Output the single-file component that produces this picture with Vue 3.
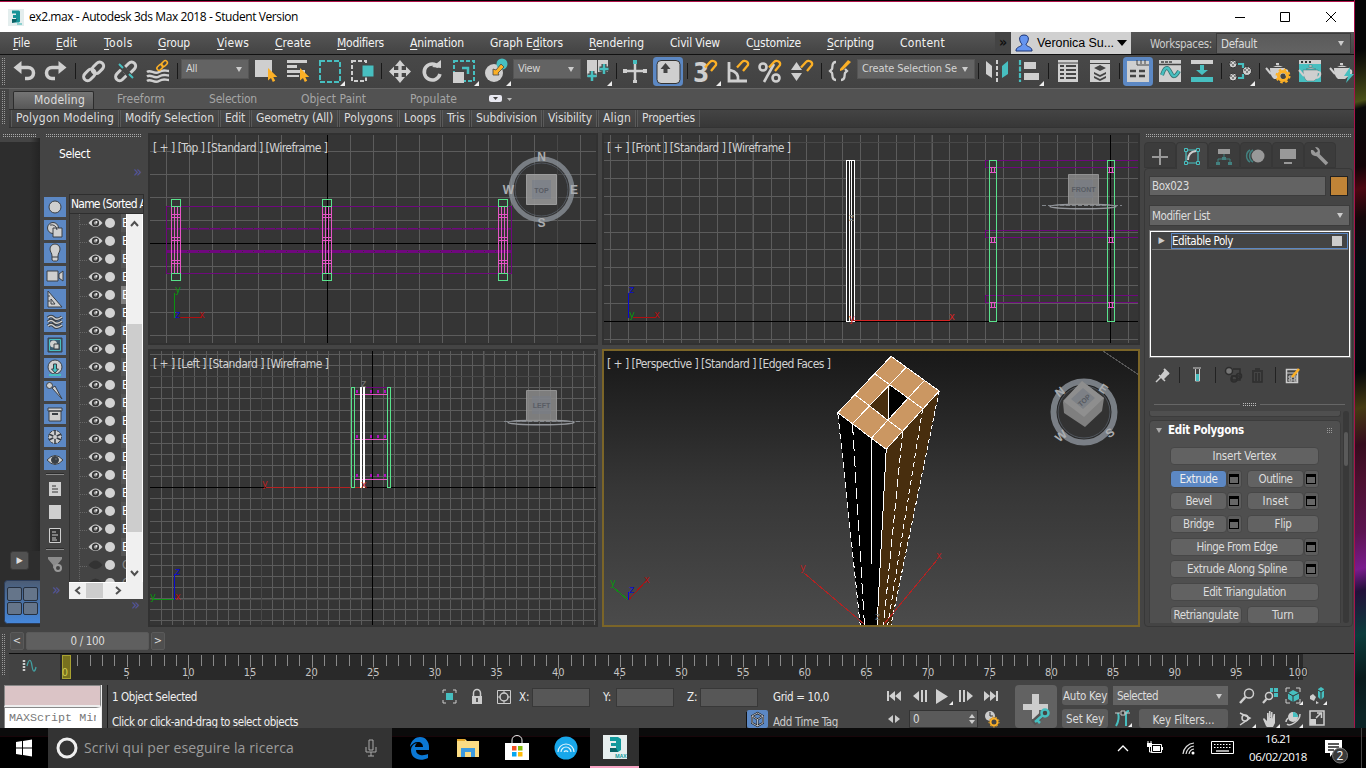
<script setup>
const vFit = {
  mounted(el, { value }) {
    if (!value) return
    const natural = el.getBoundingClientRect().width
    const count = el.textContent.length
    if (count) el.style.letterSpacing = (value - natural) / count + 'px'
  },
}

const menu = [
  ['', 'F', 'ile', 43, 17], ['', 'E', 'dit', 48, 21], ['', 'T', 'ools', 54, 29], ['', 'G', 'roup', 59, 32],
  ['', 'V', 'iews', 58, 32], ['', 'C', 'reate', 62, 36], ['', 'M', 'odifiers', 73, 47], ['', 'A', 'nimation', 80, 54],
  ['Graph E', 'd', 'itors', 99, 73], ['', 'R', 'endering', 81, 55], ['Civil View', '', '', 76, 50],
  ['C', 'u', 'stomize', 81, 55], ['', 'S', 'cripting', 73, 47], ['Content', '', '', 70, 45],
]

const L = '#cfcfcf'
const T = '#47bfc0'
const O = '#fcb026'
const corner = '<path d="M31 26v5h-5z" fill="#eee"/>'
const pointer = `<path d="M19 13v12.500l3-2.500 1.800 4 2.400-1.200-1.900-3.800h4z" fill="${O}"/>`
const chain = (c) => `<g transform="rotate(-45 16 16)" fill="none" stroke="${c}" stroke-width="3"><rect x="3.500" y="11.500" width="13" height="8" rx="4"/><rect x="14.500" y="12.500" width="13" height="8" rx="4"/></g>`
const magnet = `<path d="M15 12.500l5-5.500c2-2 7-1 6 3l-5 6" fill="none" stroke="${O}" stroke-width="2.300"/>`
const pot = (x, y) => `<g transform="translate(${x} ${y})"><path d="M4 6h15c1 5-1 9-4 11H8C5 15 4 10 4 6z" fill="${L}"/><path d="M5 12L0 6M18 8c5-1 4 5-1 6" fill="none" stroke="${L}" stroke-width="2"/><path d="M7 5q5-3 10 0z" fill="${L}"/><path d="M10 1h3v2h-3z" fill="${L}"/></g>`

const toolIcons = {
  undo: `<path d="M12 12.500h8a5.500 5.500 0 0 1 0 11h-3" fill="none" stroke="${L}" stroke-width="3.500"/><path d="M5.500 12.500l8-6.500v13z" fill="${L}"/>`,
  redo: `<path d="M20 12.500h-8a5.500 5.500 0 0 0 0 11h3" fill="none" stroke="${L}" stroke-width="3.500"/><path d="M26.500 12.500l-8-6.500v13z" fill="${L}"/>`,
  link: chain(L),
  unlink: `${chain(L)}<path d="M9 9l13 14" stroke="#444" stroke-width="5"/><path d="M9 9l4 4M19 19l4 4" stroke="${T}" stroke-width="2"/>`,
  bind: `<g fill="none" stroke="${L}" stroke-width="2.500"><path d="M5 17c4-3 7 3 12 0s6-1 10-1M5 21.500c4-3 7 3 12 0s6-1 10-1M5 26c4-3 7 3 12 0s6-1 10-1"/></g><g transform="translate(12 2) scale(.52)">${chain(O)}</g>`,
  select: `<path d="M6 5h17v17H6z" fill="${L}"/>${pointer}`,
  list: `<path d="M6 5h20v3H6zM6 10h10v3H6zM6 15h18v3H6zM6 20h12v2H6z" fill="${L}"/>${pointer}`,
  region: `<path d="M6 6h20v21H6z" fill="none" stroke="${T}" stroke-width="2" stroke-dasharray="5 2"/>${corner}`,
  window: `<path d="M6 6h14v20H6z" fill="none" stroke="${L}" stroke-width="2" stroke-dasharray="4 2"/><path d="M16 10h12v12H16z" fill="${T}" stroke="#444"/>`,
  move: `<path d="M16 5l5 6h-3.300v4H22v-3.500l5 5-5 5V18h-4.300v4H21l-5 6-5-6h3.300v-4H10v3.500l-5-5 5-5V15h4.300v-4H11z" fill="${L}"/>`,
  rotate: `<path d="M22.500 12A8 8 0 1 0 24 19" fill="none" stroke="${L}" stroke-width="3.500"/><path d="M16 12l9 1 0-8z" fill="${L}"/>`,
  scale: `<path d="M6 6h20v20H6z" fill="none" stroke="${T}" stroke-width="2" stroke-dasharray="4 2"/><path d="M5 17h11v11H5z" fill="${L}"/><path d="M14 13h6v6" fill="none" stroke="${T}" stroke-width="2.500"/>${corner}`,
  place: `<circle cx="14" cy="18" r="9" fill="${L}"/><circle cx="22" cy="9" r="5.500" fill="${T}"/><path d="M13 20v-6l3 1 5-6 3 3-6 6 1 2z" fill="${O}" stroke="#444" stroke-width=".8"/>${corner}`,
  pivot: `<path d="M6 5h10v17H6zM17 5h10v12H17z" fill="${L}"/><path d="M11 16v10M6.500 21h9M23 9v10M18.500 14h9" stroke="#444" stroke-width="5"/><path d="M11 16v10M6.500 21h9M23 9v10M18.500 14h9" stroke="${T}" stroke-width="2.500"/>${corner}`,
  manipulate: `<path d="M16 5v23M5 16h22" stroke="${L}" stroke-width="2.500"/><path d="M4 14h4v4H4zM24 14h4v4h-4zM14 25h4v3h-4z" fill="${L}"/><path d="M14 5h4v4h-4z" fill="${T}"/>`,
  keyboard: `<rect x="5" y="5.500" width="23" height="23" rx="4" fill="${L}" stroke="#333"/><path d="M13.500 8l5 6h-3v4h-4v-4h-3z" fill="#444"/>`,
  snap: `<text x="3" y="27" fill="${L}" font-family="DejaVu Sans Condensed, sans-serif" font-weight="bold" font-size="26">3</text>${magnet}${corner}`,
  angle: `<path d="M7 7v19h18M8 15q9 2 8 10" fill="none" stroke="${L}" stroke-width="2.800"/>${magnet}`,
  percent: `<g fill="none" stroke="${L}" stroke-width="2.600"><circle cx="9" cy="12" r="3.500"/><circle cx="22" cy="23" r="3.500"/><path d="M20 9L10 27"/></g>${magnet}`,
  spinner: `<path d="M5 15l5.500-8 5.500 8zM5 18h11l-5.500 8z" fill="${L}"/>${magnet}`,
  sets: `<path d="M12 7c-5 0-3 5-4 7l-2 2 2 2c1 2-1 7 4 7M17 25c5 0 3-5 4-7l2-2-2-2" fill="none" stroke="${L}" stroke-width="2.300"/><path d="M16 14l8-9 3 2-8 8-3 1z" fill="${O}"/>`,
  mirror: `<path d="M5 6l6 5v12l-6-4z" fill="${L}"/><path d="M16 5v23" stroke="${L}" stroke-width="2" stroke-dasharray="4 2"/><path d="M27 6l-6 5v12l6-4z" fill="${T}"/>`,
  align: `<path d="M7 5v22" stroke="${T}" stroke-width="2.200" stroke-dasharray="5 1.500"/><path d="M11 7h12v7H11zM11 18h15v7H11z" fill="${L}"/>${corner}`,
  scene: `<path d="M6 5h20v22H6z" fill="${L}"/><path d="M8 11h4M8 15h4M8 19h4M8 23h4M14 11h10M14 15h10M14 19h10M14 23h10" stroke="#444" stroke-width="2"/><path d="M6 8h20" stroke="#444"/>`,
  layers: `<path d="M6 5h20v22H6z" fill="${L}"/><path d="M6 8.500h20" stroke="#444"/><path d="M10 13l6-3 6 3-6 3zM10 17l6 3 6-3v2l-6 3-6-3zM10 21l6 3 6-3v2l-6 3-6-3z" fill="#444"/>`,
  ribbon: `<path d="M5 6h22v21H5z" fill="${L}"/><path d="M15 5v5h12M19 5v4M23 5v4" stroke="#444" fill="none"/><path d="M8 16h6M8 21h6M17 16h6M17 21h6" stroke="#444" stroke-width="2.500"/>`,
  curve: `<path d="M5 5h22v22H5z" fill="${L}"/><path d="M5 9.500h22M7 7h3M11 7h3M15 7h3" stroke="#444" stroke-width="1.500"/><path d="M8 20c4-12 7-6 9-2s4 5 8-2" stroke="#35706f" stroke-width="4" fill="none"/><path d="M8 20c4-12 7-6 9-2s4 5 8-2" stroke="${T}" stroke-width="2.500" fill="none"/>`,
  dope: `<path d="M5 5h22v4H5z" fill="${L}"/><path d="M5 22h22v5H5zM14 10h4v5h4l-6 5-6-5h4z" fill="${T}"/>`,
  material: `<g fill="${L}" stroke="#333"><circle cx="9" cy="9" r="4"/><circle cx="9" cy="22" r="4"/><circle cx="23" cy="16" r="4.500"/></g><path d="M6 8h6M9 5v8M6 21h6M9 18v8M20 15h6M23 12v8" stroke="#333" stroke-dasharray="2 2"/><path d="M14 9h5v4M14 23h5v-4" stroke="${T}" stroke-width="2.200" fill="none"/>${corner}`,
  setup: `${pot(4, 7)}<circle cx="21" cy="21" r="4.500" fill="none" stroke="${O}" stroke-width="3"/><circle cx="21" cy="21" r="6.500" fill="none" stroke="${O}" stroke-width="2" stroke-dasharray="2.500 2.600"/><circle cx="21" cy="21" r="2.600" fill="#444"/>`,
  frame: `<path d="M5 5h22v22H5z" fill="${T}"/><path d="M5 5h22v4H5z" fill="${L}"/><path d="M7 7h2M11 7h2M15 7h2" stroke="#333" stroke-width="2"/><g stroke="#3c7776" stroke-width=".5">${pot(5, 9)}</g>`,
  render: `${pot(4, 7)}<path d="M24 12l-6 9h4l-2 7 8-9h-4z" fill="${T}"/>`,
}
const tools = [
  'undo', 'redo', '|', 'link', 'unlink', 'bind', '|7', '=All=68=21', 'select', 'list', '_', 'region', 'window', '|',
  'move', 'rotate', 'scale', 'place', '_', '=View=68=22', 'pivot', '|', 'manipulate', '_', '*keyboard', '|', 'snap', 'angle',
  'percent', 'spinner', '|', 'sets', '_', '=Create Selection Se=118=95', '|', 'mirror', 'align', '|7', 'scene', 'layers', '|',
  '*ribbon', 'curve', 'dope', '|', 'material', '|', 'setup', 'frame', 'render',
].map((t) => {
  if (t[0] === '|') return { kind: 'sep', w: +t.slice(1) || 6 }
  if (t === '_') return { kind: 'gap', w: 1 }
  if (t[0] === '=') {
    const [, label, w, fit] = t.split('=')
    return { kind: 'combo', label, w: +w, fit: label === 'All' ? 11 : +fit }
  }
  const on = t[0] === '*'
  return { kind: 'icon', name: on ? t.slice(1) : t, on, w: 32 }
})

const tabs = [['Modeling', 81, 51, true], ['Freeform', 92, 48], ['Selection', 92, 48], ['Object Paint', 109, 65], ['Populate', 87, 47]]
const panels = [
  ['Polygon Modeling', 108, 98], ['Modify Selection', 99, 89], ['Edit', 30, 20], ['Geometry (All)', 87, 77], ['Polygons', 59, 49],
  ['Loops', 42, 32], ['Tris', 28, 18], ['Subdivision', 71, 61], ['Visibility', 54, 44], ['Align', 38, 28], ['Properties', 63, 53],
]

const D = '#3a3f45'
const filterIcons = [
  `<circle cx="11" cy="10" r="6"/>`,
  `<circle cx="9" cy="8" r="5.500"/><path d="M9 8h9v9H9z"/><path d="M6 5q6-1 7 5" fill="none"/>`,
  `<path d="M8 13c0-3-2-4-2-7a5 5 0 0 1 10 0c0 3-2 4-2 7v4l-1.500 1h-3L8 17zM8 14h6"/>`,
  `<path d="M3 5h11v10H3zM15 8l4-3v10l-4-3z"/>`,
  `<path d="M4 2v16h14zM7 10v5h4z"/><path d="M4 7h2M4 12h2"/>`,
  `<path d="M4 6q3-3 6 0t8-1M4 10q3-3 6 0t8-1M4 14q3-3 6 0t8-1" fill="none" stroke="${D}" stroke-width="3.500"/><path d="M4 6q3-3 6 0t8-1M4 10q3-3 6 0t8-1M4 14q3-3 6 0t8-1" fill="none" stroke="${L}" stroke-width="1.500"/>`,
  `<path d="M4 3h14v14H4z" fill="#3a5b70" stroke="${D}"/><path d="M5.500 4.500h11v11h-11z" fill="none" stroke="${T}"/><circle cx="9.500" cy="9" r="3.500" stroke="none"/><path d="M10 9h5v5h-5z"/>`,
  `<circle cx="11" cy="9" r="7"/><path d="M9.500 6h3v5h2L11 15l-3.500-4h2z" fill="${T}"/><path d="M5 17h12" stroke="${T}" stroke-width="2"/>`,
  `<path d="M8 7l3-2 7 13z"/><circle cx="5.500" cy="4.500" r="3"/>`,
  `<path d="M5 7h12v10H5zM4 4h14v3H4z"/><path d="M8 10h6" stroke-width="2"/>`,
  `<circle cx="11" cy="10" r="6.500" stroke-dasharray="3 1"/><path d="M11 3v14M5 7l12 6M5 13l12-6" stroke-width="1.500"/><circle cx="11" cy="10" r="2" stroke="none"/>`,
  `<path d="M3 10q8-9 16 0-8 9-16 0z"/><circle cx="11" cy="10" r="3.500" fill="${D}"/><circle cx="12" cy="9" r="1"/>`,
]
const rows = Array.from({ length: 21 }, (_, i) => ({ letter: i < 19 ? 'E' : 'C', off: i > 18, sel: i === 4, alt: i % 2 === 0 }))

const range = (start, end, step) => {
  const out = []
  for (let v = start; v <= end; v += step) out.push(Math.round(v) + 0.5)
  return out
}
const topX = range(166, 595, 23)
const topY = range(151, 342, 23)
const frontX = range(609.8, 1138, 17.874)
const frontY = range(142, 342, 17.9)
const leftX = range(161.200, 596, 11.1)
const leftY = range(354, 625, 11.1)
const topPosts = [171, 322, 498]
const ticks = Array.from({ length: 101 }, (_, i) => ({ n: i, x: 5 + i * 12.33 }))

const cmdTabs = [
  `<path d="M16 6v16M8 14h16" stroke="#999" stroke-width="2"/>`,
  `<path d="M10 7h12v13H10z" fill="none" stroke="${T}" stroke-width="1.200"/><g fill="#444" stroke="${T}"><path d="M8.500 5.500h3v3h-3zM20.500 5.500h3v3h-3zM8.500 18.500h3v3h-3zM20.500 18.500h3v3h-3z"/></g><path d="M12 17q0-8 8-9" stroke="${L}" stroke-width="2" fill="none"/>`,
  `<path d="M10 6h12v5H10z" fill="#999"/><path d="M16 11v4M10 20v-4h12v4" stroke="#43807f" fill="none"/><path d="M8 19h4v3H8zM20 19h4v3h-4zM14 14h4v3h-4z" fill="#43807f"/>`,
  `<circle cx="18" cy="13" r="6.500" fill="#999"/><path d="M13 7a7 7 0 0 0 0 12M10 7a7 7 0 0 0 0 12" stroke="#43807f" stroke-width="1.500" fill="none"/>`,
  `<path d="M8 6h16v10H8zM12 19h8v2h-8z" fill="#999"/>`,
  `<path d="M12 10l11 11" stroke="#999" stroke-width="3.500"/><path d="M9 7l3 3 2-2-3-4q5 0 5 5t-5 4-4-6z" fill="#999"/>`,
]
const play = {
  first: `<path d="M2 3v10" stroke="${L}" stroke-width="2"/><path d="M9 3v10L3 8zM15 3v10L9 8z" fill="${L}"/>`,
  prev: `<path d="M7 3v10L1 8z" fill="${L}"/><path d="M10 2v12M14 2v12" stroke="${L}" stroke-width="2"/>`,
  play: `<path d="M1 1v15l12-7.500z" fill="${L}"/><path d="M18 13v4h-4z" fill="#eee"/>`,
  next: `<path d="M2 2v12M6 2v12" stroke="${L}" stroke-width="2"/><path d="M9 3v10l6-5z" fill="${L}"/>`,
  last: `<path d="M16 3v10" stroke="${L}" stroke-width="2"/><path d="M3 3v10l6-5zM9 3v10l6-5z" fill="${L}"/>`,
}
const navCorner = '<path d="M19 14v4h-4z" fill="#eee"/>'
const nav = [
  `<circle cx="12" cy="6.500" r="4.500" fill="none" stroke="${L}" stroke-width="1.500"/><path d="M8.500 10L3 16" stroke="${L}" stroke-width="2.500"/>`,
  `<path d="M9 1h3v4H9zM13 1h4v4h-4zM13 6h4v4h-4z" fill="${T}"/><circle cx="8" cy="9" r="3.500" fill="none" stroke="${L}" stroke-width="1.500"/><path d="M5.500 12L2 16" stroke="${L}" stroke-width="2.200"/>`,
  `<path d="M2 5V1h4M12 1h4v4M2 12v4h4M12 16h4v-4" fill="none" stroke="${L}"/><path d="M9 3l6 3v6l-6 3-5-3V6z" fill="${T}"/><path d="M4 6l5 3 6-3M9 9v6" stroke="#333" fill="none"/>${navCorner}`,
  `<path d="M10 2l3-2 3 2v8l-3 3-3-3z" fill="${T}"/><path d="M10 3l3 2 3-2M13 5v8" stroke="#333" fill="none"/><path d="M2 9l3-2 3 3-2 4-4-2zM8 14l3 2-3 1z" fill="${L}"/>${navCorner}`,
  `<path d="M3 3l10 5-10 7" fill="none" stroke="${L}" stroke-width="1.500"/><circle cx="8" cy="8" r="3" fill="none" stroke="${L}" stroke-width="1.500"/>${navCorner}`,
  `<path d="M5 16L2 9l1-1 3 3V3h1.500v5L8 1h1.500v7L10 2h1.500v7l1-5H14v9l-2 4H6z" fill="${L}"/>${navCorner}`,
  `<circle cx="9" cy="7" r="5" fill="${L}"/><path d="M9 2a5 5 0 0 1 5 5H9z" fill="${T}"/><path d="M3 14c3 3 13-3 13-10M2 12c0-2 1-3 2-4" fill="none" stroke="${L}" stroke-width="1.500"/>${navCorner}`,
  `<path d="M2 1h14v14H2z" fill="#444" stroke="${L}" stroke-width="1.500"/><path d="M2 9h6v6H2z" fill="${L}"/><path d="M8 8l5-5M9 3h4.500v5" stroke="${L}" fill="none" stroke-width="1.500"/>`,
]
const axes = ['X:', 'Y:', 'Z:']
</script>

<template>
  <div class="desktop">
    <div class="wallpaper"></div>
    <div class="window">
      <header class="title">
        <svg class="logo" width="16" height="17" viewBox="0 0 16 17"><path d="M0 0h16v17H0z" fill="#e4eeee" /><path d="M4 1.500h7l1 1v10l-1 1H4v-3h4V9H5V6h3V4.500H4z" fill="#169397" /><path d="M4 10h5l-1 3-4 1z" fill="#0b6165" /><path d="M9 15h5" stroke="#35b3b1" /></svg>
        <span v-fit="269" class="app">ex2.max - Autodesk 3ds Max 2018 - Student Version</span>
        <svg class="winbtns" width="110" height="14" viewBox="0 0 110 14"><path d="M2 7.500h10M47.500 2.500h9v9h-9zM93 2l10 10M103 2L93 12" fill="none" stroke="#000" /></svg>
      </header>

      <nav class="menubar">
        <div class="menus">
          <span v-for="(m, i) in menu" :key="i" class="menu" :style="{ width: m[3] + 'px' }"><span v-fit="m[4]" class="t">{{ m[0] }}<u>{{ m[1] }}</u>{{ m[2] }}</span></span>
        </div>
        <span class="more">»</span>
        <div class="user">
          <svg width="18" height="18" viewBox="0 0 18 18"><path d="M9 1c7 0 4 8 2 9 0 3 5 2 6 6v1H1v-1c1-4 6-3 6-6-2-1-5-9 2-9z" fill="#6695f0" stroke="#1b3373" /></svg>
          <span v-fit="77">Veronica Su...</span><i class="dd"></i>
        </div>
        <span v-fit="62" class="wslabel">Workspaces:</span>
        <div class="wscombo"><span v-fit="36">Default</span><i class="dd"></i></div>
      </nav>

      <div class="toolbar">
        <i class="grip-v"></i>
        <div v-for="(t, i) in tools" :key="i" class="tool" :class="[t.kind, { on: t.on }]" :style="{ width: t.w + 'px' }">
          <svg v-if="t.kind === 'icon'" width="32" height="33" viewBox="0 0 32 33" v-html="toolIcons[t.name]"></svg>
          <template v-if="t.kind === 'combo'"><span v-fit="t.fit">{{ t.label }}</span><i class="dd"></i></template>
        </div>
      </div>

      <div class="ribbon">
        <i class="grip-v"></i>
        <div class="rtabs">
          <span v-for="t in tabs" :key="t[0]" class="rtab" :class="{ on: t[3] }" :style="{ width: t[1] + 'px' }"><span v-fit="t[2]">{{ t[0] }}</span></span>
          <svg width="26" height="10" viewBox="0 0 26 10"><rect x="1" y="1" width="13" height="7" rx="2" fill="#e8e8f0" /><path d="M5 3h5L7.500 6z" fill="#444" /><path d="M19 4h5l-2.500 3z" fill="#bbb" /></svg>
        </div>
        <div class="rpanels">
          <span v-for="p in panels" :key="p[0]" class="rpanel" :style="{ width: p[1] + 'px' }"><span v-fit="p[2]">{{ p[0] }}</span></span>
        </div>
      </div>

      <main class="work">
        <aside class="dock">
          <i class="grip-h"></i>
          <div class="dockbody"></div>
          <div class="expand">▶</div>
          <svg class="layouttab" width="36" height="45" viewBox="0 0 36 45">
            <defs><linearGradient id="tabg" x1="0" y1="0" x2="0" y2="1"><stop offset="0" stop-color="#4c5c74" /><stop offset="1" stop-color="#4588dd" /></linearGradient></defs>
            <rect x=".5" y=".5" width="40" height="43" rx="3" fill="url(#tabg)" stroke="#2c3e5c" />
            <g fill="#65758a" stroke="#26303f"><rect x="3.500" y="7.500" width="14" height="13" rx="1.500" /><rect x="19.500" y="7.500" width="14" height="13" rx="1.500" /><rect x="3.500" y="22.500" width="14" height="12" rx="1.500" /><rect x="19.500" y="22.500" width="14" height="12" rx="1.500" /></g>
          </svg>
        </aside>

        <aside class="explorer">
          <i class="grip-h"></i>
          <div class="heading"><span v-fit="31">Select</span></div>
          <div class="chev">»</div>
          <div class="exbody">
            <div class="filters">
              <svg v-for="(f, i) in filterIcons" :key="i" class="filter" width="22" height="20" viewBox="0 0 22 20" fill="#cfcfcf" stroke="#3a3f45" v-html="f"></svg>
              <i class="hr"></i>
              <svg width="22" height="68" viewBox="0 0 22 68">
                <path d="M5 4h12v14H5zM5 27h12v14H5z" fill="#cfcfcf" /><path d="M5.500 50.500h11v14h-11z" fill="#333" stroke="#cfcfcf" />
                <path d="M8 8h4M8 11h6M8 14h6" stroke="#333" /><path d="M8 54h4M8 57h6M8 60h4M8 62h5" stroke="#ccc" />
              </svg>
              <i class="hr"></i>
              <svg width="22" height="22" viewBox="0 0 22 22"><path d="M4 4h14v2l-5 6v6l-4-3v-3L4 6z" fill="#8c8c8c" /><circle cx="14" cy="15" r="3" fill="#444" stroke="#999" stroke-width="2" /></svg>
              <div class="chev mid">»</div>
            </div>
            <div class="tree">
              <div class="thead"><span v-fit="75">Name (Sorted A</span></div>
              <div class="tbody">
                <div class="trows">
                  <div v-for="(r, i) in rows" :key="i" class="trow">
                    <svg width="54" height="18" viewBox="0 0 54 18">
                      <path d="M10.500 0v18M11 10.500h8" stroke="#666" stroke-dasharray="1 1" fill="none" />
                      <path d="M19.500 9q7-9 14 0-7 8-14 0z" :fill="r.off ? '#333' : '#cfcfcf'" />
                      <g v-if="!r.off"><circle cx="26.500" cy="9" r="3.600" fill="#333" /><circle cx="26.500" cy="9" r="1.800" fill="#999" /><circle cx="27.500" cy="8" r="1" fill="#eee" /></g>
                      <circle cx="41" cy="9" r="5" fill="#d2d2d2" />
                    </svg>
                    <b :class="{ sel: r.sel, alt: r.alt, off: r.off }">{{ r.letter }}</b>
                  </div>
                </div>
                <svg class="vscroll" width="17" height="368" viewBox="0 0 17 368"><path d="M0 0h17v368H0z" fill="#fff" /><path d="M1 0h15v368H1z" fill="#f0f0f0" /><path d="M1 110h15v208H1z" fill="#cdcdcd" /><path d="M5 12l3.500-4 3.500 4M5 357l3.500 4 3.500-4" fill="none" stroke="#505050" stroke-width="2" /></svg>
              </div>
              <svg class="hscroll" width="74" height="17" viewBox="0 0 74 17"><path d="M0 0h74v17H0z" fill="#f0f0f0" /><path d="M0 0h57" stroke="#fff" stroke-width="2" /><path d="M17 1h17v15H17z" fill="#cdcdcd" /><path d="M11 5L7 8.500l4 3.500M47 5l4 3.500-4 3.500" fill="none" stroke="#505050" stroke-width="2" /></svg>
              <div class="chev end">»</div>
            </div>
          </div>
        </aside>

        <section class="views">
          <svg class="vp" width="450" height="212" viewBox="148 133 450 212">
            <g stroke="#5c5c5c"><path v-for="x in topX" :key="'x' + x" :d="`M${x} 135V343`" /><path v-for="y in topY" :key="'y' + y" :d="`M150 ${y}H596`" /></g>
            <path d="M557.500 135V343" stroke="#484848" />
            <path d="M327.500 135V343M150 243.500H596" stroke="#000" />
            <g fill="none" stroke="#6f087d">
              <path d="M166.500 206.500H511.500V273.500H166.500z" /><path d="M166 250.500H511M166 252.500H511" stroke-width="1.500" /><path d="M166 228.500H511M166 251.500H511" stroke-dasharray="10 1" /><path d="M166 229.500H511" stroke-opacity=".5" />
            </g>
            <g v-for="p in topPosts" :key="p" fill="none">
              <path :d="`M${p + .5} 207v66M${p + 3.5} 207v66M${p + 6.5} 207v66M${p + 9.5} 207v66M${p} 214.500h10M${p} 217.500h10M${p} 237.500h10M${p} 240.500h10M${p} 260.500h10M${p} 263.500h10`" stroke="#e455c5" />
              <path :d="`M${p + .5} 199.500h9v7h-9zM${p + .5} 273.500h9v7h-9z`" stroke="#59e38c" />
            </g>
            <path d="M174.500 293V318" stroke="#0a9310" /><path d="M178 317.500H202" stroke="#b00f10" />
            <g class="ax"><text x="175" y="293" fill="#0a9310">y</text><text x="175" y="318" fill="#0a0ad0">z</text><text x="199" y="318" fill="#b00f10">x</text></g>
            <g class="soft"><circle cx="541.500" cy="189.500" r="30.500" fill="none" stroke="#8b9199" stroke-opacity=".86" stroke-width="5" /><circle cx="541.500" cy="189.500" r="26.500" fill="#333" fill-opacity=".45" stroke="#555b63" />
              <path d="M526.500 174.500h30v30h-30z" fill="#929292" stroke="#a3a3a3" /><path d="M532 180h19v19h-19z" fill="#858991" />
              <text x="541.500" y="192.500" class="cube">TOP</text><text x="541.500" y="161" class="ns">N</text><text x="541.500" y="227" class="ns">S</text><text x="508.500" y="194" class="ns">W</text><text x="574" y="194" class="ns">E</text></g>
            <path d="M149 134H597V344H149z" fill="none" stroke="#313131" stroke-width="2" />
            <text x="153" y="152" class="vl" textLength="175">[ + ] [Top ] [Standard ] [Wireframe ]</text>
          </svg>

          <svg class="vp" width="538" height="212" viewBox="602 133 538 212">
            <g stroke="#5c5c5c"><path v-for="x in frontX" :key="'x' + x" :d="`M${x} 135V343`" /><path v-for="y in frontY" :key="'y' + y" :d="`M604 ${y}H1138`" /></g>
            <path d="M752.500 135V343M931.500 135V343M604 142.500H1138" stroke="#484848" />
            <path d="M1110.500 135V343M604 321.500H1138" stroke="#000" />
            <path d="M1138 160.500H985.500V167.500H1138M1138 230.500H985.500V237.500H1138M1138 295.500H985.500V302.500H1138" fill="none" stroke="#6f087d" />
            <g v-for="x in [989, 1107]" :key="x" fill="none"><path :d="`M${x + .5} 160.500h7v161h-7z`" stroke="#59e38c" />
              <path v-for="y in [167, 237, 302]" :key="y" :d="`M${x + 1} ${y}.500h6M${x + 1} ${y + 5}.500h6M${x + 2.5} ${y}v5M${x + 5.5} ${y}v5`" stroke="#e455c5" /></g>
            <path d="M846.500 160.500h8v161h-8z" fill="#222" stroke="#fff" /><path d="M849.500 160v162M851.500 160v162" stroke="#fff" /><path d="M854 320.500H950" stroke="#d32424" />
            <path d="M628.500 293V318" stroke="#0a0ad0" stroke-width="1.500" /><path d="M633 317.500H656" stroke="#b00f10" />
            <g class="ax"><text x="629" y="293" fill="#0a0ad0">z</text><text x="629" y="318" fill="#0a9310">y</text><text x="654" y="318" fill="#b00f10">x</text><text x="949" y="320" fill="#d32424">x</text><text x="849" y="322" fill="#d32424">y</text><text x="849" y="221" fill="#777">z</text></g>
            <g class="soft"><ellipse cx="1083" cy="206.500" rx="33" ry="2.300" fill="none" stroke="#9da0a5" stroke-width="1.500" /><path d="M1042 205.500h80" stroke="#888c92" stroke-dasharray="4 2" /><path d="M1068.500 174.500h30v30h-30z" fill="#8b8b8b" fill-opacity=".93" stroke="#999" /><path d="M1074 180h19v18h-19z" fill="#80848a" /><text x="1083.500" y="192" class="cube">FRONT</text></g>
            <path d="M603 134H1139V344H603z" fill="none" stroke="#313131" stroke-width="2" />
            <text x="607" y="152" class="vl" textLength="184">[ + ] [Front ] [Standard ] [Wireframe ]</text>
          </svg>

          <svg class="vp" width="450" height="278" viewBox="148 349 450 278">
            <g stroke="#5c5c5c"><path v-for="x in leftX" :key="'x' + x" :d="`M${x} 351V625`" /><path v-for="y in leftY" :key="'y' + y" :d="`M150 ${y}H596`" /></g>
            <path d="M261.500 351V625M484.500 351V625M150 376.500H596M150 599.500H596" stroke="#484848" />
            <path d="M372.500 351V625M150 487.500H596" stroke="#000" />
            <path d="M266 487.500H362" stroke="#b52222" />
            <path d="M351.500 387.500h3v100h-3zM387.500 387.500h3v100h-3z" fill="none" stroke="#59e38c" />
            <path d="M355 394.500h32M355 439.500h32M355 479.500h32" stroke="#e455c5" /><path d="M356 391.500h31M356 436.500h31M356 475.500h31" stroke="#ad12bc" stroke-width="3" stroke-dasharray="2 5" />
            <path d="M360.500 387v101M364 387v101" stroke="#fff" stroke-width="2" /><path d="M366 387.500H387" stroke="#6f087d" />
            <path d="M174.500 574V600" stroke="#0a0ad0" stroke-width="1.500" /><path d="M153 599.500H174" stroke="#0a9310" />
            <g class="ax"><text x="175" y="575" fill="#0a0ad0">z</text><text x="150" y="600" fill="#0a9310">y</text><text x="175" y="600" fill="#b00f10">x</text><text x="262" y="487" fill="#b52222">y</text><text x="361" y="387" fill="#777">z</text><text x="361" y="488" fill="#b52222">x</text></g>
            <g class="soft"><ellipse cx="541" cy="422.500" rx="33" ry="2.300" fill="none" stroke="#9da0a5" stroke-width="1.500" /><path d="M504 421.500h76" stroke="#888c92" stroke-dasharray="4 2" /><path d="M526.500 390.500h30v30h-30z" fill="#8b8b8b" fill-opacity=".93" stroke="#999" /><path d="M532 396h19v18h-19z" fill="#80848a" /><text x="541.500" y="408" class="cube">LEFT</text></g>
            <path d="M149 350H597V626H149z" fill="none" stroke="#313131" stroke-width="2" />
            <text x="153" y="368" class="vl" textLength="176">[ + ] [Left ] [Standard ] [Wireframe ]</text>
          </svg>

          <svg class="vp" width="538" height="278" viewBox="602 349 538 278">
            <defs><linearGradient id="sky" x1="0" y1="0" x2="0" y2="1"><stop offset="0" stop-color="#181818" /><stop offset=".5" stop-color="#363636" /><stop offset="1" stop-color="#4b4b4b" /></linearGradient></defs>
            <path d="M602 349h538v278H602z" fill="url(#sky)" />
            <path d="M1103 351l36 24" stroke="#555" />
            <g>
              <path d="M837.800 412.700L886.200 449.300 876.700 626H860.300z" fill="#000" />
              <path d="M886.200 449.300L939.200 391 890.800 626H876.700z" fill="#482e0e" />
              <path d="M891.100 356.300L939.200 391 886.200 449.300 837.800 412.700z" fill="#cb9762" />
              <path d="M889.700 385L908.300 398.300 888.300 420.700 869.400 405.700z" fill="#000" /><path d="M889.700 385L888.300 420.700 869.400 405.700z" fill="#482e0e" />
              <path d="M891.100 356.300L939.200 391 886.200 449.300 837.800 412.700zM875 374L922.700 408.700M855 395L869.400 405.700 888.300 420.700 902.700 431.300M906.200 367.300L852.500 423.700M924.100 380.700L871.500 438M888.500 386V420M871.500 438V564M886.200 449.300L877 626" fill="none" stroke="#fff" stroke-width="1" />
              <g fill="none" stroke="#fff" stroke-width="1"><path d="M837.800 412.700L860.300 626" stroke-dasharray="6 4" /><path d="M852.500 423.700L864.500 626" stroke-dasharray="11 5" /><path d="M902.700 431.300L883.400 626" stroke-dasharray="8 4" /><path d="M922.700 408.700L887.600 626" stroke-dasharray="5 4" /><path d="M939.200 391L890.800 626" stroke-dasharray="4 3" /></g>
              <path d="M804 573L864 624M937 560L884 624" stroke="#b52222" /><path d="M628.500 600L646 581" stroke="#b00f10" /><path d="M628 600L613 587" stroke="#0a9310" /><path d="M628.500 592V600" stroke="#0a0ad0" stroke-width="1.500" />
            </g>
            <g class="ax"><text x="644" y="583" fill="#b00f10">x</text><text x="610" y="586" fill="#0a9310">y</text><text x="629" y="593" fill="#0a0ad0">z</text><text x="800" y="571" fill="#b52222">y</text><text x="936" y="559" fill="#b52222">x</text><text x="875" y="620" fill="#666">z</text></g>
            <g class="soft"><circle cx="1084" cy="412" r="30.500" fill="none" stroke="#8b9199" stroke-opacity=".9" stroke-width="6" /><circle cx="1084" cy="412" r="26" fill="#343434" stroke="#555b63" />
              <path d="M1082 381L1104 398 1102 411 1085 427 1064 413 1063 402z" fill="#878787" /><path d="M1082 381L1104 398 1084 417 1063 401z" fill="#989898" /><path d="M1083 388l12 10-12 11-12-10z" fill="#85898f" />
              <text x="1084" y="403" class="cube" transform="rotate(-43 1084 400)">TOP</text><text x="1060" y="396" class="ns" transform="rotate(-38 1060 392)">N</text><text x="1104" y="393" class="ns" transform="rotate(35 1104 388)">E</text><text x="1110" y="437" class="ns" transform="rotate(-35 1110 433)">S</text><text x="1061" y="440" class="ns" transform="rotate(-40 1061 436)">W</text></g>
            <path d="M603 350H1139V626H603z" fill="none" stroke="#7b6528" stroke-width="2" />
            <text x="607" y="368" class="vl" textLength="224">[ + ] [Perspective ] [Standard ] [Edged Faces ]</text>
          </svg>
        </section>

        <aside class="command">
          <i class="grip-h"></i>
          <div class="ctabs"><div v-for="(c, i) in cmdTabs" :key="i" class="ctab" :class="{ on: i === 1 }"><svg width="30" height="27" viewBox="1 0 30 27" v-html="c"></svg></div></div>
          <div class="cbody">
            <div class="namerow"><div class="field"><span v-fit="37">Box023</span></div><i class="swatch"></i></div>
            <div class="modlist"><span v-fit="58">Modifier List</span><i class="dd"></i></div>
            <div class="stack"><div class="srow"><span class="tri">▶</span><div class="sitem"><span v-fit="61">Editable Poly</span><i></i></div></div></div>
            <svg class="sicons" width="200" height="24" viewBox="1149 363 200 24">
              <path d="M1156 382l5-5M1159 375l6 6M1161 376l4-5 3 3-5 5z" stroke="#ccc" fill="#ccc" stroke-width="1.500" /><path d="M1164 369l5 5" stroke="#ccc" stroke-width="2" />
              <path d="M1179.500 367v16M1215.500 367v16M1275.500 367v16" stroke="#222" />
              <path d="M1193 368h8M1195.500 369v12h4v-12" stroke="#ccc" fill="none" /><path d="M1196 374h3v7h-3z" fill="#47bfc0" />
              <g fill="none" stroke="#2d2d2d" stroke-width="1.500"><circle cx="1229" cy="371" r="3.500" fill="#777" /><path d="M1233 369h7v6M1232 376h8v4h-8z" /><circle cx="1234" cy="379" r="3" /><circle cx="1239" cy="376" r="2.500" /><path d="M1252 371h11M1255 369h5M1253 372v10h9v-10M1256 373v8M1259 373v8" /></g>
              <path d="M1286.500 369.500h11v13h-11z" fill="#444" stroke="#ccc" stroke-width="1.500" /><path d="M1287 373h10M1289 376h3v2h-3zM1294 376h3v2h-3zM1289 379h3v2h-3zM1294 379h3v2h-3z" stroke="#ccc" fill="none" /><path d="M1292 377l7-8" stroke="#fcb026" stroke-width="2.500" />
            </svg>
            <div class="split"><i class="line"></i><i class="dots"></i><i class="line"></i></div>
            <div class="rollwrap">
              <div class="rolls">
                <div class="cut"><b>Soft Selection</b></div>
                <div class="roll">
                  <div class="rhead"><i class="dd"></i><b v-fit="76">Edit Polygons</b><i class="nine"></i></div>
                  <div class="btns">
                    <span class="btn w6"><span v-fit="64">Insert Vertex</span></span>
                    <span class="btn b1 on"><span v-fit="38">Extrude</span></span><i class="set"></i><span class="btn b3"><span v-fit="34">Outline</span></span><i class="set"></i>
                    <span class="btn b1"><span v-fit="26">Bevel</span></span><i class="set"></i><span class="btn b3"><span v-fit="26">Inset</span></span><i class="set"></i>
                    <span class="btn b1"><span v-fit="31">Bridge</span></span><i class="set"></i><span class="btn b3w"><span v-fit="17">Flip</span></span>
                    <span class="btn w3"><span v-fit="81">Hinge From Edge</span></span><i class="set"></i>
                    <span class="btn w3"><span v-fit="100">Extrude Along Spline</span></span><i class="set"></i>
                    <span class="btn w6"><span v-fit="83">Edit Triangulation</span></span>
                    <span class="btn w2"><span v-fit="65">Retriangulate</span></span><span class="btn b3w"><span v-fit="22">Turn</span></span>
                  </div>
                </div>
              </div>
              <div class="rscroll"><i></i></div>
            </div>
          </div>
        </aside>
      </main>

      <footer class="bottom">
        <i class="grip-v"></i>
        <div class="track"><span class="tbtn">&lt;</span><span class="tslider"><span v-fit="34">0 / 100</span></span><span class="tbtn">&gt;</span></div>
        <div class="timeline">
          <svg class="mini" width="16" height="16" viewBox="0 0 16 16"><path d="M2 2v12" stroke="#ccc" stroke-width="2.500" stroke-dasharray="2 1" /><path d="M5 8c2-8 4-7 5 0s3 6 4 1" fill="none" stroke="#43a0a1" stroke-width="1.300" /></svg>
          <svg class="ruler" width="1256" height="27" viewBox="0 0 1256 27">
            <path d="M0 1h1243v26H0z" fill="#292929" />
            <g stroke="#898989"><path v-for="t in ticks" :key="t.n" :d="`M${Math.round(t.x) + .5} 2v${t.n % 5 ? 11 : 24}`" /></g>
            <path d="M2 2h8v23H2z" fill="#77711f" stroke="#a9a231" />
            <text v-for="t in ticks.filter((k) => k.n % 5 === 0)" :key="'l' + t.n" :x="t.x" y="23" class="num" :class="{ zero: t.n === 0 }">{{ t.n }}</text>
          </svg>
        </div>
        <div class="status">
          <div class="script"><i class="pink"></i><div class="mini-l">MAXScript Mini</div></div>
          <div class="msgs"><span v-fit="85">1 Object Selected</span><span v-fit="186">Click or click-and-drag to select objects</span></div>
          <div class="coords">
            <div class="crow">
              <svg width="70" height="20" viewBox="0 0 70 20"><path d="M2 6V3h3M12 3h3v3M2 13v3h3M12 16h3v-3" fill="none" stroke="#ccc" /><path d="M5 6h7v7H5z" fill="#47bfc0" /><path d="M32.500 10V6a3.500 3.500 0 0 1 7 0v4" fill="none" stroke="#ccc" stroke-width="1.500" /><path d="M31 9h10v8H31z" fill="#ccc" /><path d="M36 11v4" stroke="#333" stroke-width="1.500" /><path d="M56.500 3.500h13v13h-13z" fill="none" stroke="#ccc" /><path d="M63 3v14M56 10h14" stroke="#ccc" stroke-dasharray="4 1" /><circle cx="63" cy="10" r="4" fill="#444" stroke="#ccc" stroke-width="1.500" /></svg>
              <template v-for="a in axes" :key="a"><span class="axis">{{ a }}</span><i class="num-f"></i></template>
              <span class="gridtext"><span v-fit="56">Grid = 10,0</span></span>
            </div>
            <div class="crow two"><svg width="23" height="18" viewBox="0 0 23 18"><path d="M.5 2v16" stroke="#111" /><rect x="1" y="0" width="21" height="18" rx="2" fill="#5c88c4" /><path d="M11.500 3l5.500 3v7l-5.500 3L6 13V6zM6 6l5.500 3.500L17 6M11.500 9v7" fill="none" stroke="#222" stroke-width="2" /><path d="M11.500 3l5.500 3v7l-5.500 3L6 13V6zM6 6l5.500 3.500L17 6M11.500 9v7" fill="none" stroke="#cfd7e4" stroke-width=".8" /></svg><span v-fit="65">Add Time Tag</span></div>
          </div>
          <div class="play">
            <div class="prow"><svg v-for="(p, k) in play" :key="k" :class="k" width="18" height="18" viewBox="0 0 18 18" v-html="p"></svg></div>
            <div class="prow two"><svg width="16" height="16" viewBox="0 0 16 16"><path d="M7 4v8L2 8zM9 4v8l5-4z" fill="#ccc" /></svg><span class="frame">0<svg width="8" height="12" viewBox="0 0 8 12"><path d="M1 5l3-4 3 4zM1 7h6l-3 4z" fill="#ccc" /></svg></span><svg width="18" height="18" viewBox="0 0 18 18"><circle cx="7" cy="6" r="5" fill="#ccc" /><path d="M7 2v4h3" stroke="#333" fill="none" /><circle cx="11" cy="12" r="4.500" fill="#444" /><circle cx="11" cy="12" r="3.500" fill="none" stroke="#fcb026" stroke-width="2" /><circle cx="11" cy="12" r="5" fill="none" stroke="#fcb026" stroke-dasharray="1.500 2" /></svg></div>
          </div>
          <div class="bigkey"><svg width="42" height="42" viewBox="0 0 42 42"><path d="M17 9h7v10h9v6h-9v9h-7v-9H8v-6h9z" fill="#ccc" /><path d="M18 38l12-11" stroke="#555" stroke-width="6" /><circle cx="30" cy="28" r="3.500" fill="#444" stroke="#47bfc0" stroke-width="2.500" /><path d="M28 30l-8 7M22 35l3 3" stroke="#47bfc0" stroke-width="2.500" /></svg></div>
          <div class="keys"><span class="kbtn"><span v-fit="44">Auto Key</span></span><span class="kcombo"><span v-fit="41">Selected</span><i class="dd"></i></span><span class="kbtn"><span v-fit="38">Set Key</span></span>
            <span class="kpair"><svg width="20" height="18" viewBox="0 0 20 18"><path d="M5 4q2 6-2 13M13 17V6q0-4 3-4" stroke="#47bfc0" stroke-width="2" fill="none" /><path d="M2 4h5M11 4h6M8 2h4v4H8z" stroke="#ccc" fill="#333" /><path d="M19 14v4h-4z" fill="#eee" /></svg><span class="kbtn kf"><span v-fit="62">Key Filters...</span></span></span>
          </div>
          <div class="nav"><svg v-for="(n, i) in nav" :key="i" width="20" height="19" viewBox="0 0 20 19" v-html="n"></svg></div>
        </div>
      </footer>
    </div>

    <div class="taskbar">
      <svg class="start" width="48" height="40" viewBox="0 0 48 40"><path d="M16 14l6-1v6.500h-6zM23 12.900l9-1.300v7.900h-9zM16 20.500h6V27l-6-1zM23 20.500h9v7.900L23 27z" fill="#fff" /></svg>
      <div class="search"><svg width="24" height="24" viewBox="0 0 24 24"><circle cx="12" cy="12" r="9" fill="none" stroke="#eee" stroke-width="3" /></svg><span v-fit="210">Scrivi qui per eseguire la ricerca</span><svg class="mic" width="14" height="18" viewBox="0 0 14 18"><path d="M5 1h4v10H5zM2 8v5h10V8M7 13v4M4 17h6" fill="none" stroke="#aaa" /></svg></div>
      <div class="apps">
        <div class="tapp"><svg width="24" height="24" viewBox="0 0 24 24"><path d="M3 11C4 4 9 1 13 1c6 0 9 5 9 10v3H9c0 6 8 6 12 4v4c-8 4-17 1-17-8 0-3 2-6 6-7-1 1-2 2-2 4h8c0-3-2-5-5-5-4 0-6 2-8 5z" fill="#0b78d4" /></svg></div>
        <div class="tapp"><svg width="24" height="22" viewBox="0 0 24 22"><path d="M1 2h8l2 2h12v16H1z" fill="#fbdc84" /><path d="M1 2h8v2H1z" fill="#e4a92d" /><path d="M5 11h14v9h-4v-5h-6v5H5z" fill="#3d9be0" /></svg></div>
        <div class="tapp"><svg width="24" height="26" viewBox="0 0 24 26"><path d="M7 9V5a5 4.500 0 0 1 10 0v4" fill="none" stroke="#eee" /><path d="M0 8h24v17H0z" fill="#fff" /><path d="M7 11h4.500v4.500H7z" fill="#f35325" /><path d="M13 11h4.500v4.500H13z" fill="#81bc06" /><path d="M7 17h4.500v4.500H7z" fill="#05a6f0" /><path d="M13 17h4.500v4.500H13z" fill="#ffba08" /></svg></div>
        <div class="tapp"><svg width="24" height="24" viewBox="0 0 24 24"><circle cx="12" cy="12" r="11.500" fill="#18a7ea" /><path d="M4 16a8 8 0 0 1 16 0M7 16a5 5 0 0 1 10 0M10 16a2.300 2.300 0 0 1 4 0" fill="none" stroke="#dff3fc" stroke-width="1.200" /></svg></div>
        <div class="tapp on"><svg width="24" height="24" viewBox="0 0 24 24"><path d="M0 0h24v24H0z" fill="#e6eeee" /><path d="M7 2h8l3 2v11l-3 2H7v-4h6v-2H8V8h5V6H7z" fill="#129a9d" /><path d="M7 13h6l2 4H7z" fill="#096467" /><text x="12" y="23" fill="#129a9d" font-size="5" font-family="Open Sans, sans-serif" font-weight="bold">MAX</text></svg></div>
      </div>
      <svg class="tray" width="120" height="20" viewBox="1115 738 120 20"><path d="M1118 751l5-5 5 5" fill="none" stroke="#fff" stroke-width="1.300" /><path d="M1151.500 744.500h10v8h-10z" fill="none" stroke="#fff" /><path d="M1153 746h7v5h-7zM1162 747h1v3h-1zM1147 743h5v4h-5z" fill="#fff" /><path d="M1148 741v3M1151 741v3M1149.500 747v5h3" stroke="#fff" fill="none" /><g fill="none" stroke="#ddd" stroke-width="1.200"><path d="M1183 754a12 12 0 0 1 11-11M1186 754a9 9 0 0 1 8-8M1189 754a6 6 0 0 1 5-5" /></g><circle cx="1193" cy="753" r="1.500" fill="#fff" /><path d="M1211.500 741.500h22v12h-22z" fill="none" stroke="#fff" /><path d="M1214 744.500h17M1214 747.500h17" stroke="#fff" stroke-dasharray="1.500 1.500" /><path d="M1216 751h13" stroke="#fff" stroke-width="1.300" /></svg>
      <div class="clock"><span v-fit="26">16.21</span><span v-fit="58">06/02/2018</span></div>
      <svg class="notif" width="32" height="28" viewBox="0 0 32 28"><path d="M4 4h17v13H12l-3 4v-4H4z" fill="#fff" /><path d="M7 8h11M7 11h11M7 14h6" stroke="#222" stroke-width="1.500" /><circle cx="19" cy="19.500" r="7.500" fill="#3a3a3a" stroke="#777" /><text x="19" y="24" text-anchor="middle" fill="#fff" font-size="12" font-family="Open Sans, sans-serif">2</text></svg>
      <i class="peek"></i>
    </div>
  </div>
</template>

<style>
body { background: #000; overflow: hidden; }
</style>

<style scoped>
.desktop { position: relative; width: 1366px; height: 768px; overflow: hidden; background: #000; font: 11.500px/16px "DejaVu Sans Condensed", "DejaVu Sans", "Noto Sans", sans-serif; font-stretch: condensed; color: #ddd; white-space: nowrap; }
.desktop * { box-sizing: border-box; }
svg { display: block; flex: none; }
span { flex: none; }
.wallpaper { position: absolute; right: 0; top: 0; width: 11px; height: 728px; background: linear-gradient(165deg, #050505 0 7%, #22220e 10%, #4a5018 14%, #0a0a0a 15%, #120307 23%, #4c0712 26%, #14060a 30%, #080c12 36%, #05070a 51%, #453a12 56%, #350c1e 61%, #4c1030 66%, #5c1350 73%, #7a1b8d 78%, #22103a 81%, #0c3c3c 87%, #0a1a1c 93%, #0c2426 98%); }
.window { position: relative; width: 1355px; height: 736px; background: #444; border-right: 1px solid #a8124a; display: flex; flex-direction: column; }
.title { height: 32px; background: #fff; border-top: 1px solid #000; box-shadow: inset 0 1px #b0124a; display: flex; align-items: center; padding: 1px 18px 0 8px; color: #000; font: 12px/16px "Open Sans", "Noto Sans", sans-serif; font-stretch: normal; flex: none; }
.app { margin-left: 5px; }
.winbtns { margin-left: auto; margin-right: -7px; }
.menubar { height: 23px; flex: none; display: flex; background: linear-gradient(#565656, #434343); border-bottom: 1px solid #111; color: #f2f2f2; font-size: 12px; line-height: 22px; }
.menus { display: flex; padding-left: 13px; width: 995px; }
.menu { flex: none; }
.t { display: inline-block; }
u { text-underline-offset: 2px; }
.more { width: 16px; text-align: center; background: #444; color: #111; font-weight: bold; font-size: 14px; line-height: 20px; }
.user { width: 120px; height: 22px; background: #d0d0d0; color: #000; display: flex; align-items: center; padding-left: 4px; font: 12.500px "Liberation Sans", sans-serif; }
.user span { margin-left: 4px; }
.dd { display: block; width: 0; height: 0; border: 3.500px solid transparent; border-top: 5px solid #ccc; border-bottom: 0; margin-left: auto; margin-right: 6px; flex: none; }
.user .dd { border-width: 6px 5px 0; border-top-color: #000; margin-right: 4px; }
.wslabel { margin: 1px 4px 0 19px; font-size: 11.500px; color: #ccc; }
.wscombo { width: 135px; height: 21px; margin-top: 1px; background: linear-gradient(#5a5a5a, #636363); border: 1px solid #3b3b3b; display: flex; align-items: center; padding-left: 4px; font-size: 11.500px; color: #ddd; }
.toolbar { height: 33px; flex: none; display: flex; align-items: flex-start; overflow: hidden; background: linear-gradient(#484848, #424242); }
.toolbar .grip-v { margin-right: 3px; }
.grip-v { display: block; width: 3px; height: 27px; margin: 3px 0 0 2px; background: linear-gradient(#999 50%, transparent 50%) 0 0/1px 2px repeat-y, linear-gradient(#999 50%, transparent 50%) 2px 0/1px 2px repeat-y; flex: none; }
.tool { flex: none; height: 33px; }
.sep { display: flex; justify-content: center; padding-top: 8px; }
.sep::before { content: ""; width: 1px; height: 16px; background: #191919; }
.tool.on { background: #5c88c4; background-clip: padding-box; height: 29px; margin-top: 2px; border: solid transparent; border-width: 0 1px; border-radius: 4px; }
.tool.on svg { margin: -2px 0 0 -1px; }
.combo { height: 20px; margin-top: 4px; background: #636363; border: 1px solid #555; display: flex; align-items: center; padding-left: 4px; font-size: 11px; color: #d4d4d4; }
.ribbon { height: 40px; flex: none; position: relative; background: #444; border-top: 1px solid #656565; }
.ribbon .grip-v { position: absolute; left: 0; top: -1px; height: 34px; }
.rtabs { margin-left: 9px; height: 20px; background: #525252; display: flex; align-items: flex-end; color: #a5a5a5; font-size: 12px; line-height: 16px; padding-left: 4px; }
.rtab { height: 18px; padding-left: 23px; }
.rtab.on { background: linear-gradient(#757575, #575757); border: 1px solid #2c2c2c; border-bottom: 0; border-radius: 2px 2px 0 0; color: #ddd; padding-left: 20px; }
.rtabs svg { margin: 0 0 5px 14px; }
.rpanels { margin-left: 9px; height: 19px; border-top: 1px solid #2d2d2d; border-bottom: 1px solid #333; display: flex; gap: 1px; background: linear-gradient(#444, #373737); padding-left: 2px; font-size: 12px; line-height: 17px; color: #ddd; }
.rpanel { border: 1px solid #5a5a5a; border-width: 0 1px; display: flex; justify-content: center; background: linear-gradient(#4a4a4a, #404040); }
.work { flex: none; height: 502px; padding-top: 5px; display: flex; }
.grip-h { display: block; height: 3px; margin: 1px 3px 1px; background: linear-gradient(90deg, #aaa 50%, transparent 50%) 0 0/2px 1px repeat-x, linear-gradient(90deg, #aaa 50%, transparent 50%) 0 2px/2px 1px repeat-x; }
.dock { width: 40px; display: flex; flex-direction: column; position: relative; background: linear-gradient(#2d2d2d, #2d2d2d) 0 9px/40px 100% no-repeat; margin-bottom: 3px; }
.dockbody { height: 413px; background: linear-gradient(90deg, transparent 75%, #242424); }
.expand { width: 19px; height: 19px; margin: 0 0 10px 10px; background: #515151; border: 1px solid #3a3a3a; border-radius: 3px; font-size: 9px; text-align: center; line-height: 17px; color: #ddd; }
.layouttab { margin-left: 4px; }
.explorer { width: 108px; }
.explorer > .grip-h { margin-left: 6px; margin-right: 6px; }
.heading { padding: 8px 0 0 19px; font-size: 12px; color: #fff; height: 26px; }
.chev { color: #56569c; font-size: 16px; line-height: 16px; text-align: right; padding-right: 6px; height: 30px; }
.exbody { display: flex; padding-left: 4px; }
.filters { width: 25px; padding-top: 3px; }
.filter { background: #5c88c4; margin-bottom: 3px; }
.hr { display: block; height: 2px; width: 18px; margin: 2px 0 3px 2px; background: linear-gradient(#2d2d2d 50%, #888 50%); }
.chev.mid { text-align: left; padding: 7px 0 0 8px; height: 20px; }
.tree { width: 75px; }
.thead { height: 20px; border: 1px solid #2e2e2e; background: #444; overflow: hidden; padding-left: 1px; font-size: 12px; line-height: 18px; color: #fff; width: 75px; }
.tbody { display: flex; height: 368px; overflow: hidden; }
.trows { width: 57px; border-left: 1px solid #303030; flex: none; }
.trow { display: flex; height: 18px; overflow: hidden; }
.trow svg { margin-left: -1px; }
.trow b { flex: 1; font: 12px/18px "DejaVu Sans Condensed", sans-serif; color: #fff; overflow: hidden; margin-left: -2px; padding-left: 1px; background: #4c4c4c; }
.trow b.alt { background: #555; }
.trow b.sel { background: #808080; }
.trow b.off { color: #888; background: #444; }
.chev.end { padding: 0 4px 0 0; margin-top: -2px; }
.views { width: 992px; display: grid; grid-template-columns: 450px 538px; grid-template-rows: 212px 278px; gap: 4px; height: 494px; }
.vp { background: #353535; shape-rendering: crispEdges; }
.soft { shape-rendering: auto; opacity: .92; }
.vl { font: 12px "DejaVu Sans Condensed", sans-serif; fill: #d2d2d2; }
.ax { font: 11px "DejaVu Sans Condensed", sans-serif; }
.cube { font: bold 7px "Liberation Sans", sans-serif; fill: #5c6068; text-anchor: middle; }
.ns { font: bold 12px "Liberation Sans", sans-serif; fill: #b5b8bb; text-anchor: middle; }
.command { width: 214px; padding: 0 1px 0 4px; height: 495px; }
.command > .grip-h { margin: 1px 2px 5px; }
.ctabs { display: flex; height: 26px; }
.ctab { width: 32px; height: 26px; border: 1px solid #373737; border-radius: 4px 4px 0 0; background: #3c3c3c; }
.ctab.on { background: #444; border-bottom: 0; height: 27px; }
.cbody { border: 1px solid #383838; border-radius: 4px; height: 459px; padding: 7px 3px 0 4px; overflow: hidden; }
.namerow { display: flex; justify-content: space-between; width: 199px; }
.field, .modlist { height: 20px; background: #636363; border: 1px solid #3c3c3c; padding-left: 2px; line-height: 18px; display: flex; align-items: center; color: #ddd; }
.field { width: 177px; }
.swatch { width: 18px; height: 20px; background: #c08437; border: 1px solid #222; }
.modlist { margin-top: 9px; width: 201px; height: 21px; }
.stack { margin-top: 4px; width: 202px; height: 128px; border: 1px solid #777; box-shadow: inset 0 0 0 1px #fff; padding: 2px; }
.srow { display: flex; height: 17px; border-bottom: 1px solid #777; }
.tri { width: 19px; text-align: center; font-size: 9px; line-height: 15px; color: #ccc; }
.sitem { flex: 1; height: 16px; border: 1px solid #5c88c4; display: flex; align-items: center; color: #fff; line-height: 14px; }
.sitem i { margin: 0 5px 0 auto; width: 10px; height: 10px; background: #ccc; }
.sicons { margin-top: 5px; }
.split { display: flex; align-items: center; height: 10px; margin: 12px 4px 0 5px; }
.line { flex: 1; height: 1px; background: #666; }
.dots { width: 14px; height: 3px; margin: 0 3px; background: linear-gradient(90deg, #bbb 50%, transparent 50%) 0 0/2px 1px repeat-x, linear-gradient(90deg, #bbb 50%, transparent 50%) 0 2px/2px 1px repeat-x; }
.rollwrap { display: flex; margin-top: 2px; height: 212px; overflow: hidden; }
.rolls { width: 193px; height: 212px; overflow: hidden; }
.cut { height: 6px; background: #4f4f4f; border: 1px solid #3c3c3c; border-top: 0; border-radius: 0 0 3px 3px; overflow: hidden; display: flex; align-items: flex-end; padding-left: 18px; color: #fff; }
.cut b { font-size: 11px; line-height: 16px; flex: none; margin-bottom: 1px; }
.roll { margin-top: 3px; height: 214px; background: #4f4f4f; border: 1px solid #3c3c3c; border-radius: 4px; }
.rhead { display: flex; align-items: center; height: 18px; padding-left: 6px; color: #fff; }
.rhead .dd { margin: 0 6px 0 0; border-width: 5px 3px 0; border-top-color: #aaa; }
.rhead b { flex: none; }
.nine { width: 5px; height: 5px; margin: 0 8px 0 auto; background: linear-gradient(90deg, #999 50%, transparent 50%) 0 0/2px 1px repeat-x, linear-gradient(90deg, #999 50%, transparent 50%) 0 2px/2px 1px repeat-x, linear-gradient(90deg, #999 50%, transparent 50%) 0 4px/2px 1px repeat-x; }
.btns { padding: 8px 0 0 20px; display: flex; flex-wrap: wrap; gap: 4.700px 0; width: 170px; color: #ddd; }
.btn { height: 18px; background: #626262; border: 1px solid #474747; border-radius: 4px; display: flex; justify-content: center; line-height: 16px; }
.btn.on { background: #5c88c4; color: #eee; }
.w6 { width: 149px; }
.b1 { width: 57px; }
.b3 { width: 57px; margin-left: 5px; }
.b3w { width: 72px; margin-left: 5px; }
.w3 { width: 134px; }
.w2 { width: 72px; }
.set { width: 15px; height: 18px; border: 1px solid #474747; border-radius: 3px; background: linear-gradient(#666, #666) 2px 6px/8px 6px no-repeat, linear-gradient(#000, #000) 1px 3px/10px 10px no-repeat, #5c5c5c; }
.rscroll { width: 6px; height: 212px; margin-left: 2px; background: #393939; border-radius: 3px; padding: 21px 1px 0; }
.rscroll i { display: block; height: 34px; background: #5a5a5a; border-radius: 2px; }
.bottom { flex: none; height: 98px; position: relative; }
.bottom > .grip-v { position: absolute; left: 0; top: 1px; height: 42px; }
.track { height: 23px; display: flex; gap: 2px; padding: 2px 0 0 10px; }
.tbtn, .tslider { height: 18px; background: #4f4f4f; border: 1px solid #5a5a5a; border-radius: 2px; text-align: center; line-height: 16px; font-size: 11px; }
.tbtn { width: 14px; }
.tslider { width: 123px; background: #5f5f5f; display: flex; justify-content: center; font-size: 11.500px; }
.timeline { display: flex; height: 27px; margin-left: 9px; border-top: 1px solid #0e0e0e; background: #424242; }
.mini { margin: 4px 22px 0 13px; }
.ruler { shape-rendering: crispEdges; margin-top: -1px; }
.num { font: 11px "DejaVu Sans Condensed", sans-serif; fill: #c5c5c5; text-anchor: middle; stroke: #292929; stroke-width: 2px; paint-order: stroke; }
.num.zero { stroke: none; fill: #cfc94c; }
.status { display: flex; height: 48px; padding: 5px 0 0 4px; }
.script { width: 98px; height: 43px; border-right: 1px solid #eee; }
.pink { display: block; height: 22px; background: #dbc4c6; border: 1px solid #888; border-bottom: 2px solid #eee; }
.mini-l { height: 21px; background: #fff; color: #777; font: 11.700px/20px "Liberation Mono", monospace; overflow: hidden; border: 1px solid #888; border-bottom: 0; padding-left: 4px; border-right: 5px solid #fff; }
.msgs { width: 334px; margin-left: 5px; padding: 4px 0 0 4px; border-left: 1px solid #191919; display: flex; flex-direction: column; align-items: flex-start; gap: 9px; color: #f0f0f0; }
.coords { width: 441px; padding-top: 1px; }
.crow { display: flex; align-items: center; height: 22px; }
.crow.two { padding-left: 305px; height: 18px; margin-top: 2px; gap: 4px; }
.crow.two span { color: #ccc; margin-top: 6px; }
.axis { width: 13px; margin-left: 8px; color: #eee; }
.crow i + .axis { margin-left: 13px; width: 13px; }
.num-f { width: 58px; height: 19px; background: #575757; border: 1px solid #383838; }
.gridtext { margin-left: 15px; color: #eee; }
.play { width: 122px; padding-top: 2px; }
.prow { display: flex; align-items: center; height: 19px; gap: 5px; padding-left: 4px; }
.prow .play { width: 18px; padding: 0; }
.prow .prev { margin-left: 3px; }
.prow.two { gap: 0; padding-left: 4px; margin-top: 3px; }
.frame { width: 69px; height: 18px; margin: 0 5px 0 7px; background: #5a5a5a; border: 1px solid #333; display: flex; align-items: center; justify-content: space-between; padding: 0 1px 0 3px; }
.bigkey { width: 42px; height: 43px; margin-left: 11px; background: #626262; border-radius: 4px; flex: none; }
.keys { display: grid; grid-template-columns: 46px 115px; gap: 4px 5px; margin: 1px 0 0 5px; height: 42px; grid-template-rows: 19px 19px; color: #ddd; }
.kbtn { background: #5c5c5c; border-radius: 3px; display: flex; justify-content: center; line-height: 21px; }
.kcombo { background: #636363; display: flex; align-items: center; padding: 1px 0 0 4px; }
.kpair { display: flex; gap: 6px; }
.kf { flex: 1; line-height: 22px; }
.nav { display: grid; grid-template-columns: repeat(4, 23.500px); grid-template-rows: 23px 19px; margin: 2px 0 0 9px; }
.taskbar { position: absolute; left: 0; top: 728px; width: 1366px; height: 40px; background: linear-gradient(#0b0b0b 0 8px, #180509 8px 9px, #000 9px); display: flex; align-items: center; font-family: "Open Sans", "Noto Sans", sans-serif; font-stretch: normal; color: #fff; }
.search { width: 344px; height: 40px; background: #333; display: flex; align-items: center; padding-left: 7px; font-size: 14px; color: #9c9c9c; flex: none; }
.search span { margin-left: 5px; line-height: 20px; }
.mic { margin-left: auto; margin-right: 14px; }
.apps { display: flex; padding-left: 2px; width: 723px; }
.tapp { width: 49px; height: 40px; display: flex; align-items: center; justify-content: center; }
.tapp.on { background: #2f2f2f; border-bottom: 2px solid #f7a3c3; }
.clock { margin-left: 12px; width: 62px; display: flex; flex-direction: column; align-items: center; font-size: 11.500px; line-height: 18px; }
.notif { margin-left: 12px; margin-top: 4px; }
.peek { width: 1px; height: 40px; background: #444; margin-left: auto; margin-right: 4px; }
</style>
